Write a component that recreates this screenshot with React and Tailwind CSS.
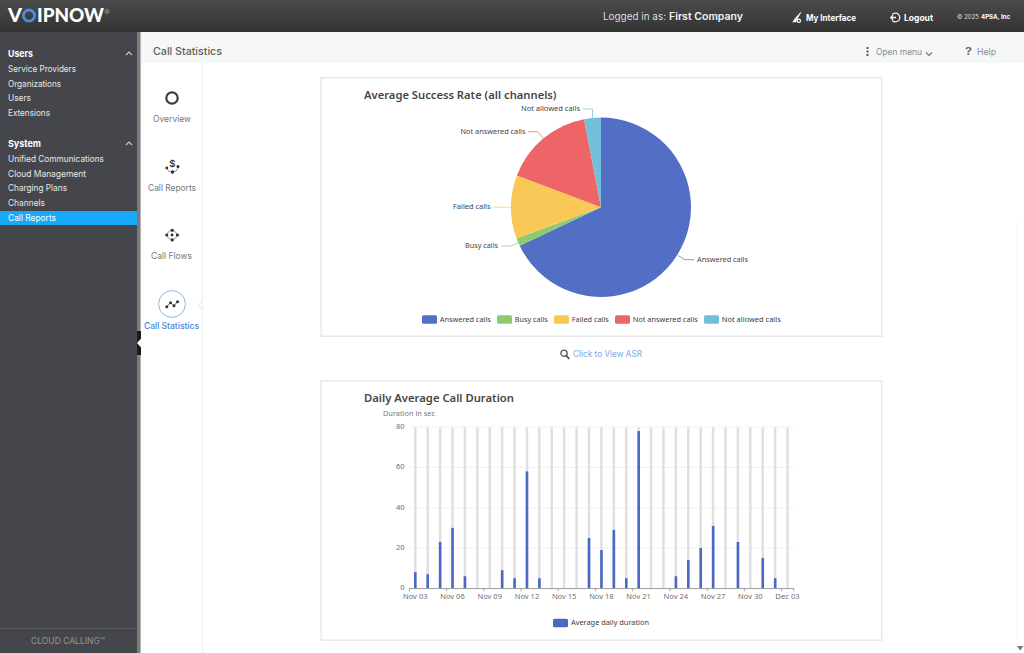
import React from "react";

const sections = [
  {
    title: "Users",
    items: [
      { label: "Service Providers", width: 68 },
      { label: "Organizations", width: 53 },
      { label: "Users", width: 23 },
      { label: "Extensions", width: 42 },
    ],
  },
  {
    title: "System",
    items: [
      { label: "Unified Communications", width: 96 },
      { label: "Cloud Management", width: 78 },
      { label: "Charging Plans", width: 59 },
      { label: "Channels", width: 37 },
      { label: "Call Reports", width: 48, active: true },
    ],
  },
];

const slices = [
  { name: "Answered calls", from: 0, to: 244.6, color: "#526ec5" },
  { name: "Busy calls", from: 244.6, to: 249.7, color: "#8dcb70" },
  { name: "Failed calls", from: 249.7, to: 290.8, color: "#f9c857" },
  { name: "Not answered calls", from: 290.8, to: 349.2, color: "#ee6567" },
  { name: "Not allowed calls", from: 349.2, to: 360, color: "#72bfdc" },
];

const pieLabels = [
  { text: "Not allowed calls", x: 521, y: 111.2, width: 59, line: "M583 109H592.5V118", color: "#72bfdc" },
  { text: "Not answered calls", x: 460.5, y: 134, width: 65, line: "M528 131.7H537.5L543.5 138.5", color: "#ee6567" },
  { text: "Failed calls", x: 453, y: 209.2, width: 37.5, line: "M493.5 207.2H511.5", color: "#f9c857" },
  { text: "Busy calls", x: 465, y: 248.3, width: 33, line: "M501 246H511L518.5 242.5", color: "#8dcb70" },
  { text: "Answered calls", x: 697, y: 262, width: 51, line: "M678 255.5L685 259.7H694", color: "#526ec5" },
];

const pieLegend = [
  { text: "Answered calls", x: 422, width: 51, color: "#526ec5" },
  { text: "Busy calls", x: 497, width: 33, color: "#8dcb70" },
  { text: "Failed calls", x: 554, width: 37, color: "#f9c857" },
  { text: "Not answered calls", x: 615, width: 65, color: "#ee6567" },
  { text: "Not allowed calls", x: 704, width: 59, color: "#72bfdc" },
];

const durations = [
  8, 7, 23, 30, 6, 0, 0, 9, 5, 58, 5, 0, 0, 0, 25, 19, 29, 5, 78, 0, 0, 6, 14,
  20, 31, 0, 23, 0, 15, 5, 0,
];

const days = [
  "Nov 03", "Nov 06", "Nov 09", "Nov 12", "Nov 15", "Nov 18",
  "Nov 21", "Nov 24", "Nov 27", "Nov 30", "Dec 03",
];

const point = (angle) => {
  const a = (angle * Math.PI) / 180;
  return `${601 + 90 * Math.sin(a)} ${207.3 - 89.7 * Math.cos(a)}`;
};

// One line of text, fitted to a given width
const Label = ({ text, width, size = 9, className = "fill-current" }) => (
  <svg width={width} height="14" className="block shrink-0 overflow-visible">
    <text
      x="0"
      y="10"
      fontSize={size}
      textLength={width}
      lengthAdjust="spacingAndGlyphs"
      className={className}
    >
      {text}
    </text>
  </svg>
);

const Header = () => (
  <header className="flex h-8 shrink-0 items-center bg-linear-to-b from-[#4b4b4b] to-[#333333] text-white">
    <div className="flex w-[603px] pl-2">
      <svg width="104" height="24" className="block overflow-visible">
        <g fontFamily="Lato" fontWeight="900" fontSize="19.5" fill="#fff">
          <text x="0" y="18.3" textLength="14" lengthAdjust="spacingAndGlyphs">V</text>
          <text x="29" y="18.3" textLength="67" lengthAdjust="spacingAndGlyphs">IPNOW</text>
        </g>
        <circle cx="21" cy="11.6" r="5.6" fill="none" stroke="#4a8fdd" strokeWidth="2.8" />
        <text x="96.5" y="10.5" fontSize="7.5" fill="#aaa">®</text>
      </svg>
    </div>
    <div className="flex w-[188px] items-center gap-[3px] pt-[2px] text-[#dedede]">
      <Label text="Logged in as:" width={63} size={10} />
      <span className="font-semibold text-[#f2f2f2]">
        <Label text="First Company" width={74} size={10} />
      </span>
    </div>
    <div className="flex w-[99px] items-center gap-1 pt-[3px] font-bold">
      <svg width="11" height="12" viewBox="0 0 11 12">
        <path d="M9.8 .5L4.3 6.3L5.7 7.5Z" fill="#fff" stroke="#fff" strokeWidth=".8" />
        <path d="M4 6.5C2.5 7 3 9.5 .8 10.2H5.2L5.8 7.8" fill="#fff" />
        <circle cx="7.8" cy="8.8" r="1.7" fill="none" stroke="#fff" strokeWidth="1.2" />
      </svg>
      <Label text="My Interface" width={50} size={9} />
    </div>
    <div className="flex w-[67px] items-center gap-[3px] pt-[3px] font-bold">
      <svg width="11" height="11" viewBox="0 0 11 11" fill="none" stroke="#f2f2f2" strokeWidth="1.3">
        <path d="M2.2 2.5A4.4 4.4 0 1 1 2.2 8.5M.5 5.5H6M3 3.2L.6 5.5L3 7.8" />
      </svg>
      <Label text="Logout" width={29} size={9} />
    </div>
    <div className="flex items-center gap-[2px] text-[#ddd]">
      <Label text="© 2025" width={22} size={6} />
      <span className="font-bold text-white">
        <Label text="4PSA, Inc" width={29} size={6} />
      </span>
    </div>
  </header>
);

const Sidebar = () => (
  <aside className="flex w-[137px] shrink-0 flex-col bg-[#44464b] pt-[13.5px] text-[#e8e8e8]">
    {sections.map((section) => (
      <div key={section.title} className="mb-[15.5px]">
        <div className="flex h-4 items-center justify-between pr-1 pl-2 font-bold text-white">
          <Label text={section.title} width={section.title === "Users" ? 25 : 33} size={9.5} />
          <svg width="8" height="5" fill="none" stroke="#c8c8c8" strokeWidth="1.1">
            <path d="M1 4L4 1L7 4" />
          </svg>
        </div>
        {section.items.map((item) => (
          <div
            key={item.label}
            className={
              item.active
                ? "flex h-[14.7px] items-center bg-[#17aaf8] pl-2 text-white"
                : "flex h-[14.7px] items-center pl-2"
            }
          >
            <Label text={item.label} width={item.width} size={8.8} />
          </div>
        ))}
      </div>
    ))}
    <div className="mt-auto flex h-[25px] items-center border-t border-[#595b60] pl-[31px] text-[#93959a]">
      <Label text="CLOUD CALLING™" width={74} size={8.5} />
    </div>
  </aside>
);

const Divider = () => (
  <div className="flex w-1 shrink-0 flex-col border-r border-[#b4b4b4] bg-[#7b7b7b] pt-[299px]">
    <svg width="4" height="24" className="block shrink-0 overflow-visible">
      <path d="M0 0H4V24H0Z" fill="#1b1b1b" />
      <path d="M4.5 7L0 12L4.5 17Z" fill="#fff" />
    </svg>
  </div>
);

const ReportNav = () => (
  <nav className="flex w-[62px] shrink-0 flex-col items-center gap-[26.7px] border-r border-[#ededed] pt-[21px] text-[#777777]">
    <div className="flex flex-col items-center">
      <svg width="28" height="28">
        <circle cx="14" cy="14" r="5.7" fill="none" stroke="#3d3d3d" strokeWidth="2.2" />
      </svg>
      <Label text="Overview" width={38} size={8.8} />
    </div>
    <div className="flex flex-col items-center">
      <svg width="28" height="28" fill="#333">
        <text x="11.3" y="14" fontSize="9.5" fontWeight="600">$</text>
        <path d="M9 15.5Q10 19 14 19.3Q19 19 20 15" fill="none" stroke="#777" strokeWidth=".8" />
        <circle cx="8.8" cy="15" r="1.4" />
        <circle cx="14.5" cy="19" r="1.7" />
        <circle cx="20" cy="13.5" r="1.5" />
      </svg>
      <Label text="Call Reports" width={48} size={8.8} />
    </div>
    <div className="flex flex-col items-center">
      <svg width="28" height="28" fill="#333">
        <circle cx="14" cy="14" r="4.7" fill="none" stroke="#777" strokeWidth=".8" />
        <circle cx="14" cy="14" r="1.4" />
        <circle cx="14.2" cy="9.3" r="1.6" />
        <circle cx="14.2" cy="18.9" r="1.6" />
        <circle cx="8.8" cy="14" r="1.6" />
        <circle cx="19.4" cy="14" r="1.6" />
      </svg>
      <Label text="Call Flows" width={41} size={8.8} />
    </div>
    <div className="relative flex flex-col items-center text-[#4285dc]">
      <svg width="28" height="28" fill="#333">
        <circle cx="14" cy="14" r="13.4" fill="#fff" stroke="#8fb6ea" />
        <path d="M9 16.6L12.5 12.5L16 15.6L19.3 12" fill="none" stroke="#555" strokeWidth=".9" />
        <circle cx="8.8" cy="16.7" r="1.5" />
        <circle cx="12.5" cy="12.7" r="1.5" />
        <circle cx="16" cy="15.8" r="1.5" />
        <circle cx="19.5" cy="11.8" r="1.5" />
      </svg>
      <span className="pt-[0.6px] font-medium">
        <Label text="Call Statistics" width={55} size={8.8} />
      </span>
      <svg width="5" height="10" className="absolute top-[10px] -right-[4px]" fill="#fff" stroke="#e4e4e4">
        <path d="M4.5 .5L.8 5L4.5 9.5" />
      </svg>
    </div>
  </nav>
);

const Swatch = ({ x, y, color }) => (
  <rect x={x} y={y} width="15" height="8.5" rx="1.5" fill={color} />
);

const PieCard = () => (
  <svg width="563" height="260" viewBox="320 77 563 260" fontFamily="Noto Sans" className="block">
    <rect x="321.2" y="77.7" width="560.6" height="258.6" fill="#fff" stroke="#e6e6e6" strokeWidth="1.4" />
    <text x="364" y="99" fontSize="10.7" fontWeight="600" fill="#464646" textLength="192.5" lengthAdjust="spacingAndGlyphs">
      Average Success Rate (all channels)
    </text>
    {slices.map((s) => (
      <path
        key={s.name}
        d={`M601 207.3L${point(s.from)}A90 89.7 0 ${s.to - s.from > 180 ? 1 : 0} 1 ${point(s.to)}Z`}
        fill={s.color}
      />
    ))}
    {pieLabels.map((l) => (
      <g key={l.text}>
        <path d={l.line} fill="none" stroke={l.color} strokeWidth=".7" />
        <text x={l.x} y={l.y} fontSize="7.3" fill="#444" textLength={l.width} lengthAdjust="spacingAndGlyphs">
          {l.text}
        </text>
      </g>
    ))}
    {pieLegend.map((l) => (
      <g key={l.text}>
        <Swatch x={l.x} y={315.3} color={l.color} />
        <text x={l.x + 17.8} y="321.8" fontSize="7.3" fill="#3c3c3c" textLength={l.width} lengthAdjust="spacingAndGlyphs">
          {l.text}
        </text>
      </g>
    ))}
  </svg>
);

const DurationCard = () => (
  <svg width="563" height="261" viewBox="320 380 563 261" fontFamily="Noto Sans" className="block">
    <rect x="321.2" y="380.9" width="560.6" height="259.2" fill="#fff" stroke="#e6e6e6" strokeWidth="1.4" />
    <text x="364" y="402.3" fontSize="10.7" fontWeight="600" fill="#464646" textLength="150" lengthAdjust="spacingAndGlyphs">
      Daily Average Call Duration
    </text>
    <text x="383" y="416.3" fontSize="7.3" fill="#7a7a7a" textLength="52" lengthAdjust="spacingAndGlyphs">
      Duration in sec
    </text>
    {[0, 20, 40, 60, 80].map((v) => (
      <g key={v}>
        <path d={`M409 ${588.3 - v * 2.015}H794`} stroke="#e9ebf0" strokeWidth=".7" />
        <text x="404.5" y={590.3 - v * 2.015} textAnchor="end" fontSize="7.5" fill="#6f6f6f">
          {v}
        </text>
      </g>
    ))}
    {durations.map((v, i) => (
      <g key={i}>
        <rect x={414 + i * 12.41} y="427.2" width="2.5" height="161" fill="#e0e0e0" />
        <rect x={414 + i * 12.41} y={588.3 - v * 2.015} width="2.6" height={v * 2.015} fill="#4a69c4" />
      </g>
    ))}
    <path d="M409 588.6H794" stroke="#85878c" strokeWidth=".8" />
    {days.map((day, i) => (
      <g key={day}>
        <path d={`M${409.3 + i * 37.23} 588.5V591.3`} stroke="#85878c" strokeWidth=".7" />
        <text x={403 + i * 37.23} y="598.7" fontSize="7.3" fill="#6f6f6f" textLength="24.5" lengthAdjust="spacingAndGlyphs">
          {day}
        </text>
      </g>
    ))}
    <path d="M793.8 588.5V591.3" stroke="#85878c" strokeWidth=".7" />
    <Swatch x={553} y={618.7} color="#4a69c4" />
    <text x="571" y="625.2" fontSize="7.3" fill="#3c3c3c" textLength="78" lengthAdjust="spacingAndGlyphs">
      Average daily duration
    </text>
  </svg>
);

const TitleBar = () => (
  <div className="flex h-[31px] shrink-0 items-center bg-[#f6f8f8] pt-[9px] pl-[12px] text-[#8a8a8a]">
    <h1 className="w-[711px] font-medium text-[#5c5c5c]">
      <Label text="Call Statistics" width={69} size={10.5} />
    </h1>
    <div className="flex w-[101px] items-center">
      <svg width="12" height="12" fill="#555">
        <rect x="2.5" y="1" width="2" height="2" />
        <rect x="2.5" y="4.5" width="2" height="2" />
        <rect x="2.5" y="8" width="2" height="2" />
      </svg>
      <Label text="Open menu" width={46} size={8.8} />
      <svg width="8" height="8" className="mt-[3px] ml-[3px]" fill="none" stroke="#777" strokeWidth="1.2">
        <path d="M1 2.5L4 5.5L7 2.5" />
      </svg>
    </div>
    <div className="flex items-center gap-[5px]">
      <span className="font-semibold text-[#666]">
        <Label text="?" width={7} size={11} />
      </span>
      <Label text="Help" width={19} size={8.8} />
    </div>
  </div>
);

const App = () => {
  return (
    <div className="flex h-[653px] w-[1024px] flex-col overflow-hidden bg-white font-['Inter',sans-serif]">
      <Header />
      <div className="flex min-h-0 flex-1">
        <Sidebar />
        <Divider />
        <main className="flex min-w-0 flex-1 flex-col">
          <TitleBar />
          <div className="flex min-h-0 flex-1">
            <ReportNav />
            <section className="flex flex-1 flex-col pt-[14px] pl-[117px]">
              <PieCard />
              <div className="flex h-[43px] items-start gap-[3px] pt-[10px] pl-[240px] text-[#7da9e6]">
                <svg width="10" height="11" className="mt-[2px]" fill="none" stroke="#555">
                  <circle cx="4" cy="4.2" r="3.1" strokeWidth="1.3" />
                  <path d="M6.3 6.7L9.3 10" strokeWidth="1.8" />
                </svg>
                <Label text="Click to View ASR" width={69} size={8.8} />
              </div>
              <DurationCard />
            </section>
            <div className="flex w-[7px] shrink-0 flex-col items-center justify-between pt-[159px] pb-[2px]">
              <div className="w-full flex-1 border-l border-[#f3f3f3]" />
              <svg width="7" height="6" className="block">
                <path d="M0 1H6.5L3.2 5.5Z" fill="#777" />
              </svg>
            </div>
          </div>
        </main>
      </div>
    </div>
  );
};

export default App;
